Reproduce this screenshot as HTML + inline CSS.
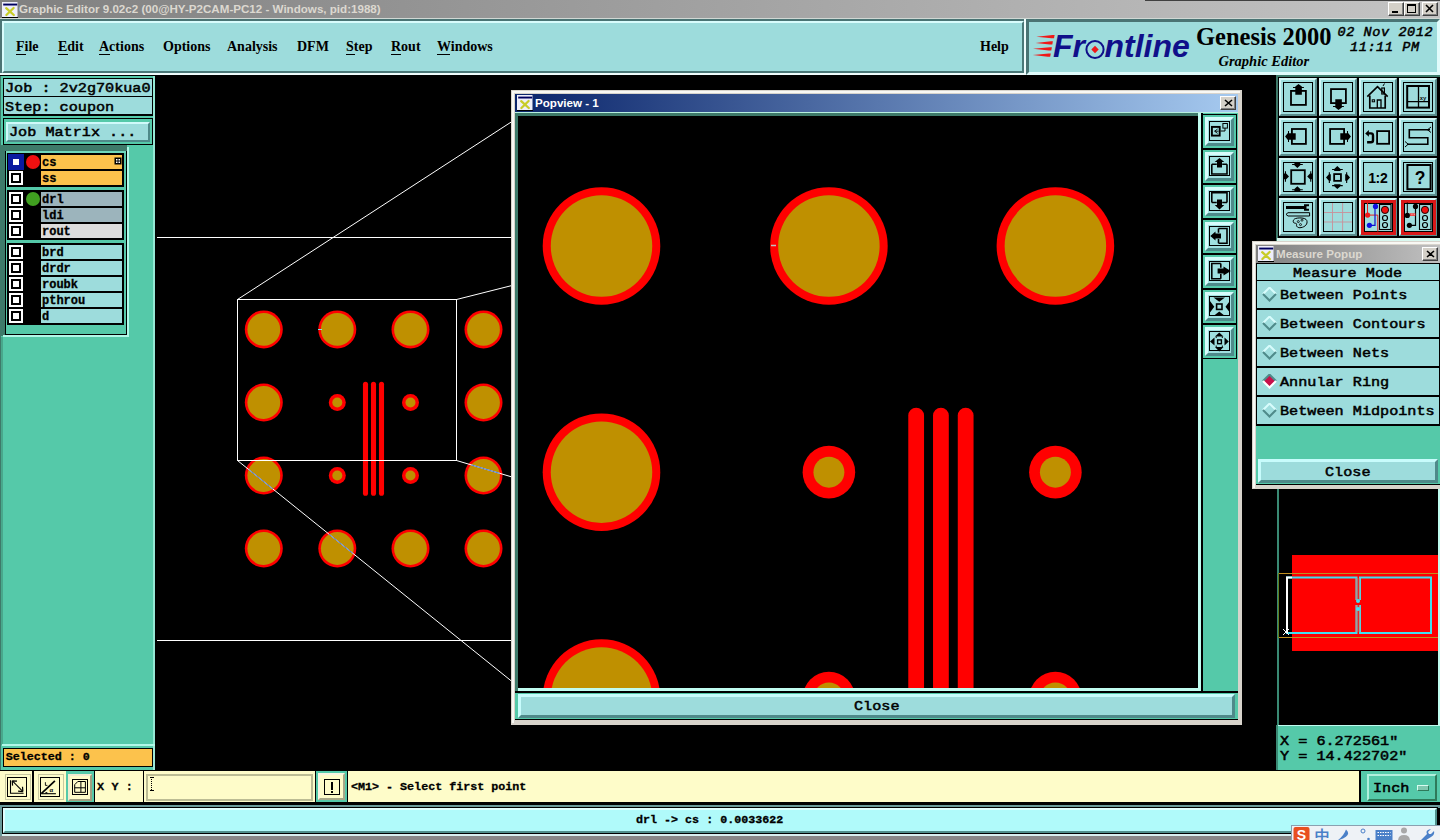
<!DOCTYPE html><html><head><meta charset="utf-8"><style>
*{margin:0;padding:0;box-sizing:border-box}
html,body{width:1440px;height:840px;overflow:hidden;background:#000}
body{position:relative;font-family:"Liberation Sans",sans-serif}
.a{position:absolute}
.mono{font-family:"Liberation Mono",monospace;font-weight:bold}
.ms{-webkit-text-stroke:0.3px #000}
.mb{font-weight:normal;-webkit-text-stroke:0.5px #000}
.serif{font-family:"Liberation Serif",serif;font-weight:bold}
.t{white-space:pre;line-height:1}
</style></head><body>
<div class="a" style="left:0px;top:0px;width:1440px;height:18px;background:linear-gradient(90deg,#808080 0%,#c4c4c4 100%);"></div>
<div class="a" style="left:1145px;top:0px;width:295px;height:1px;background:#404040;"></div>
<svg class="a" style="left:2px;top:2px" width="16" height="16" viewBox="0 0 16 16">
<rect x="0" y="0" width="15.5" height="15" fill="#eeeefa"/><rect x="1.2" y="1.6" width="14" height="1.9" fill="#000060"/>
<rect x="0" y="15" width="16" height="1" fill="#000"/>
<path d="M4.2 6.2 L11.8 13 M11.6 6 L4.4 13" stroke="#c8cc28" stroke-width="2.3" stroke-linecap="round"/></svg>
<div class="a t " style="left:19px;top:3px;font-size:11.6px;color:#dcd8d0;font-weight:bold">Graphic Editor 9.02c2 (00@HY-P2CAM-PC12 - Windows, pid:1988)</div>
<div class="a" style="left:1388px;top:2px;width:16px;height:14px;background:#d4d0c8;border-style:solid;border-width:1px;border-color:#fff #404040 #404040 #fff;box-shadow:inset -1px -1px 0 #808080"></div>
<div class="a" style="left:1392px;top:11px;width:6px;height:2px;background:#000"></div>
<div class="a" style="left:1404px;top:2px;width:16px;height:14px;background:#d4d0c8;border-style:solid;border-width:1px;border-color:#fff #404040 #404040 #fff;box-shadow:inset -1px -1px 0 #808080"></div>
<div class="a" style="left:1407px;top:4px;width:9px;height:9px;border:1px solid #000;border-top-width:2px"></div>
<div class="a" style="left:1422px;top:2px;width:16px;height:14px;background:#d4d0c8;border-style:solid;border-width:1px;border-color:#fff #404040 #404040 #fff;box-shadow:inset -1px -1px 0 #808080"></div>
<svg class="a" style="left:1425px;top:4px" width="10" height="9"><path d="M1 1L8 8M8 1L1 8" stroke="#000" stroke-width="1.6"/></svg>
<div class="a" style="left:0px;top:18px;width:1440px;height:1px;background:#d0d8d4;"></div>
<div class="a" style="left:0px;top:19px;width:1026px;height:56px;background:#4a7474;"></div>
<div class="a" style="left:0px;top:73px;width:1026px;height:2px;background:#eefcfc;"></div>
<div class="a" style="left:1024px;top:19px;width:2px;height:56px;background:#eefcfc;"></div>
<div class="a" style="left:2px;top:21px;width:1022px;height:52px;background:#9ddcdc;border-style:solid;border-width:2px;border-color:#d8fcfc #4a7878 #4a7878 #d8fcfc;"></div>
<div class="a t serif" style="left:16px;top:40px;font-size:14px;color:#000;">File</div>
<div class="a t serif" style="left:58px;top:40px;font-size:14px;color:#000;">Edit</div>
<div class="a t serif" style="left:99px;top:40px;font-size:14px;color:#000;">Actions</div>
<div class="a t serif" style="left:163px;top:40px;font-size:14px;color:#000;">Options</div>
<div class="a t serif" style="left:227px;top:40px;font-size:14px;color:#000;">Analysis</div>
<div class="a t serif" style="left:297px;top:40px;font-size:14px;color:#000;">DFM</div>
<div class="a t serif" style="left:346px;top:40px;font-size:14px;color:#000;">Step</div>
<div class="a t serif" style="left:391px;top:40px;font-size:14px;color:#000;">Rout</div>
<div class="a t serif" style="left:437px;top:40px;font-size:14px;color:#000;">Windows</div>
<div class="a t serif" style="left:980px;top:40px;font-size:14px;color:#000;">Help</div>
<div class="a" style="left:16px;top:54px;width:10px;height:1px;background:#000;"></div>
<div class="a" style="left:58px;top:54px;width:10px;height:1px;background:#000;"></div>
<div class="a" style="left:99px;top:54px;width:11px;height:1px;background:#000;"></div>
<div class="a" style="left:346px;top:54px;width:9px;height:1px;background:#000;"></div>
<div class="a" style="left:391px;top:54px;width:10px;height:1px;background:#000;"></div>
<div class="a" style="left:437px;top:54px;width:13px;height:1px;background:#000;"></div>
<div class="a" style="left:1026px;top:19px;width:414px;height:56px;background:#9ddcdc;border-style:solid;border-width:3px;border-color:#4a7474 #e0fcfc #e0fcfc #4a7474;"></div>
<svg class="a" style="left:1030px;top:30px" width="30" height="30" viewBox="0 0 30 30"><path d="M6.3 6.7 L22.6 5.1 L24.6 5.1 L24.0 8.3 L21.6 8.3 Z" fill="#f01818"/><path d="M5.6 12.9 L20.9 11.3 L22.9 11.3 L22.299999999999997 14.5 L19.9 14.5 Z" fill="#f01818"/><path d="M3 18.8 L19.9 17.2 L21.9 17.2 L21.299999999999997 20.400000000000002 L18.9 20.400000000000002 Z" fill="#f01818"/><path d="M2.8 25.1 L18.8 23.5 L20.8 23.5 L20.2 26.700000000000003 L17.8 26.700000000000003 Z" fill="#f01818"/></svg>
<div class="a t " style="left:1053px;top:29.5px;font-size:32px;color:#10108a;font-weight:bold;font-style:italic">Fr</div>
<div class="a t " style="left:1104.5px;top:29.5px;font-size:32px;color:#10108a;font-weight:bold;font-style:italic">ntline</div>
<svg class="a" style="left:1084px;top:39px" width="22" height="22" viewBox="0 0 22 22"><circle cx="11" cy="10.5" r="8.6" fill="none" stroke="#10108a" stroke-width="2"/><path d="M11 6.8 L14.7 10.5 L11 14.2 L7.3 10.5Z" fill="#f01818"/></svg>
<div class="a t serif" style="left:1196px;top:24.5px;font-size:24.5px;color:#000;">Genesis 2000</div>
<div class="a t " style="left:1218.5px;top:53.5px;font-size:14.5px;color:#000;font-family:'Liberation Serif',serif;font-weight:bold;font-style:italic">Graphic Editor</div>
<div class="a t mono mb" style="left:1337.5px;top:25.5px;font-size:13.5px;color:#000;font-style:italic;letter-spacing:0.6px">02 Nov 2012</div>
<div class="a t mono mb" style="left:1350px;top:40.5px;font-size:13.5px;color:#000;font-style:italic;letter-spacing:0.6px">11:11 PM</div>
<div class="a" style="left:0px;top:75px;width:155px;height:696px;background:#55c9a9;"></div>
<div class="a" style="left:0px;top:75px;width:155px;height:1px;background:#000;"></div>
<div class="a" style="left:0px;top:76px;width:1px;height:695px;background:#3e7a6a;"></div>
<div class="a" style="left:3px;top:78px;width:150px;height:38px;background:#000;"></div>
<div class="a" style="left:4px;top:79px;width:148px;height:17px;background:#9ddcdc;"></div>
<div class="a" style="left:4px;top:97px;width:148px;height:17px;background:#9ddcdc;"></div>
<div class="a t mono mb" style="left:4.8px;top:81.7px;font-size:13.5px;color:#000;transform:scaleX(1.123);transform-origin:0 0">Job : 2v2g70kua0</div>
<div class="a t mono mb" style="left:5px;top:101px;font-size:13.5px;color:#000;transform:scaleX(1.123);transform-origin:0 0">Step: coupon</div>
<div class="a" style="left:3px;top:118px;width:150px;height:27px;background:#000;"></div>
<div class="a" style="left:4px;top:119px;width:148px;height:25px;background:#55c9a9;"></div>
<div class="a" style="left:6px;top:121.5px;width:144px;height:20.5px;background:#9ddcdc;border-style:solid;border-width:2px;border-color:#d0fafa #4f8a8a #4f8a8a #d0fafa;"></div>
<div class="a t mono mb" style="left:9.2px;top:126.2px;font-size:13.5px;color:#000;transform:scaleX(1.123);transform-origin:0 0">Job Matrix ...</div>
<div class="a" style="left:1px;top:145px;width:126px;height:6px;background:#3e7a6a;"></div>
<div class="a" style="left:1px;top:145px;width:4px;height:191px;background:#3e7a6a;"></div>
<div class="a" style="left:5px;top:151px;width:122px;height:184px;background:#000;"></div>
<div class="a" style="left:6px;top:151px;width:120px;height:183px;background:#55c9a9;"></div>
<div class="a" style="left:6px;top:151px;width:120px;height:2px;background:#70d8bc;"></div>
<div class="a" style="left:3px;top:335px;width:126px;height:2px;background:#b0f8e8;"></div>
<div class="a" style="left:127px;top:147px;width:2px;height:190px;background:#b0f8e8;"></div>
<div class="a" style="left:153px;top:76px;width:2px;height:670px;background:#94e8d4;"></div>
<div class="a" style="left:7px;top:153px;width:117px;height:34px;background:#000;"></div>
<div class="a" style="left:41px;top:155px;width:81px;height:14px;background:#fcc24c;"></div>
<div class="a t mono ms" style="left:42px;top:156.6px;font-size:12px;color:#000;">cs</div>
<div class="a" style="left:8px;top:154px;width:16px;height:16px;background:#0a1aa0;"></div>
<div class="a" style="left:11px;top:157px;width:10px;height:10px;background:#0a1aa0;"></div>
<div class="a" style="left:13px;top:159px;width:6px;height:6px;background:#fff;"></div>
<div class="a" style="left:41px;top:171px;width:81px;height:14px;background:#fcc24c;"></div>
<div class="a t mono ms" style="left:42px;top:172.6px;font-size:12px;color:#000;">ss</div>
<div class="a" style="left:9px;top:171px;width:14px;height:14px;background:#fff;"></div>
<div class="a" style="left:11px;top:173px;width:10px;height:10px;background:#000;"></div>
<div class="a" style="left:13px;top:175px;width:6px;height:6px;background:#fff;"></div>
<div class="a" style="left:7px;top:190px;width:117px;height:50px;background:#000;"></div>
<div class="a" style="left:41px;top:192px;width:81px;height:14px;background:#9cb4bc;"></div>
<div class="a t mono ms" style="left:42px;top:193.6px;font-size:12px;color:#000;">drl</div>
<div class="a" style="left:9px;top:192px;width:14px;height:14px;background:#fff;"></div>
<div class="a" style="left:11px;top:194px;width:10px;height:10px;background:#000;"></div>
<div class="a" style="left:13px;top:196px;width:6px;height:6px;background:#fff;"></div>
<div class="a" style="left:41px;top:208px;width:81px;height:14px;background:#9cb4bc;"></div>
<div class="a t mono ms" style="left:42px;top:209.6px;font-size:12px;color:#000;">ldi</div>
<div class="a" style="left:9px;top:208px;width:14px;height:14px;background:#fff;"></div>
<div class="a" style="left:11px;top:210px;width:10px;height:10px;background:#000;"></div>
<div class="a" style="left:13px;top:212px;width:6px;height:6px;background:#fff;"></div>
<div class="a" style="left:41px;top:224px;width:81px;height:14px;background:#dcdcdc;"></div>
<div class="a t mono ms" style="left:42px;top:225.6px;font-size:12px;color:#000;">rout</div>
<div class="a" style="left:9px;top:224px;width:14px;height:14px;background:#fff;"></div>
<div class="a" style="left:11px;top:226px;width:10px;height:10px;background:#000;"></div>
<div class="a" style="left:13px;top:228px;width:6px;height:6px;background:#fff;"></div>
<div class="a" style="left:7px;top:243px;width:117px;height:82px;background:#000;"></div>
<div class="a" style="left:41px;top:245px;width:81px;height:14px;background:#9ddcdc;"></div>
<div class="a t mono ms" style="left:42px;top:246.6px;font-size:12px;color:#000;">brd</div>
<div class="a" style="left:9px;top:245px;width:14px;height:14px;background:#fff;"></div>
<div class="a" style="left:11px;top:247px;width:10px;height:10px;background:#000;"></div>
<div class="a" style="left:13px;top:249px;width:6px;height:6px;background:#fff;"></div>
<div class="a" style="left:41px;top:261px;width:81px;height:14px;background:#9ddcdc;"></div>
<div class="a t mono ms" style="left:42px;top:262.6px;font-size:12px;color:#000;">drdr</div>
<div class="a" style="left:9px;top:261px;width:14px;height:14px;background:#fff;"></div>
<div class="a" style="left:11px;top:263px;width:10px;height:10px;background:#000;"></div>
<div class="a" style="left:13px;top:265px;width:6px;height:6px;background:#fff;"></div>
<div class="a" style="left:41px;top:277px;width:81px;height:14px;background:#9ddcdc;"></div>
<div class="a t mono ms" style="left:42px;top:278.6px;font-size:12px;color:#000;">roubk</div>
<div class="a" style="left:9px;top:277px;width:14px;height:14px;background:#fff;"></div>
<div class="a" style="left:11px;top:279px;width:10px;height:10px;background:#000;"></div>
<div class="a" style="left:13px;top:281px;width:6px;height:6px;background:#fff;"></div>
<div class="a" style="left:41px;top:293px;width:81px;height:14px;background:#9ddcdc;"></div>
<div class="a t mono ms" style="left:42px;top:294.6px;font-size:12px;color:#000;">pthrou</div>
<div class="a" style="left:9px;top:293px;width:14px;height:14px;background:#fff;"></div>
<div class="a" style="left:11px;top:295px;width:10px;height:10px;background:#000;"></div>
<div class="a" style="left:13px;top:297px;width:6px;height:6px;background:#fff;"></div>
<div class="a" style="left:41px;top:309px;width:81px;height:14px;background:#9ddcdc;"></div>
<div class="a t mono ms" style="left:42px;top:310.6px;font-size:12px;color:#000;">d</div>
<div class="a" style="left:9px;top:309px;width:14px;height:14px;background:#fff;"></div>
<div class="a" style="left:11px;top:311px;width:10px;height:10px;background:#000;"></div>
<div class="a" style="left:13px;top:313px;width:6px;height:6px;background:#fff;"></div>
<div class="a" style="left:26px;top:155px;width:14px;height:14px;border-radius:50%;background:#f01010"></div>
<div class="a" style="left:26px;top:192px;width:14px;height:14px;border-radius:50%;background:#40a020"></div>
<svg class="a" style="left:114px;top:157px" width="8" height="9"><rect x="0.5" y="0.5" width="7" height="7" fill="#000"/><rect x="2" y="2" width="1.5" height="1.5" fill="#fff"/><rect x="4.5" y="2" width="1.5" height="1.5" fill="#fff"/><rect x="2" y="4.5" width="1.5" height="1.5" fill="#fff"/><rect x="4.5" y="4.5" width="1.5" height="1.5" fill="#fff"/></svg>
<div class="a" style="left:1px;top:337px;width:2px;height:408px;background:#48a88c;"></div>
<div class="a" style="left:2px;top:744px;width:153px;height:2px;background:#b0f8e8;"></div>
<div class="a" style="left:3px;top:748px;width:150px;height:19px;background:#000;"></div>
<div class="a" style="left:4px;top:749px;width:148px;height:17px;background:#fcc24c;"></div>
<div class="a" style="left:153px;top:746px;width:2px;height:24px;background:#9ce8d8;"></div>
<div class="a t mono ms" style="left:5.7px;top:751.7px;font-size:11.7px;color:#000;">Selected : 0</div>
<svg class="a" style="left:0;top:0" width="1440" height="840" viewBox="0 0 1440 840"><defs><clipPath id="mc"><rect x="155" y="75" width="1121" height="695"/></clipPath><clipPath id="pc"><rect x="518" y="116" width="680" height="572"/></clipPath></defs><g clip-path="url(#mc)"><circle cx="263.8" cy="329.4" r="19.0" fill="#ff0000"/><circle cx="263.8" cy="329.4" r="16.4" fill="#bf9000"/><circle cx="337.3" cy="329.4" r="19.0" fill="#ff0000"/><circle cx="337.3" cy="329.4" r="16.4" fill="#bf9000"/><circle cx="410.5" cy="329.4" r="19.0" fill="#ff0000"/><circle cx="410.5" cy="329.4" r="16.4" fill="#bf9000"/><circle cx="483.5" cy="329.4" r="19.0" fill="#ff0000"/><circle cx="483.5" cy="329.4" r="16.4" fill="#bf9000"/><circle cx="263.8" cy="402.5" r="19.0" fill="#ff0000"/><circle cx="263.8" cy="402.5" r="16.4" fill="#bf9000"/><circle cx="337.3" cy="402.5" r="8.5" fill="#ff0000"/><circle cx="337.3" cy="402.5" r="5.0" fill="#bf9000"/><circle cx="410.5" cy="402.5" r="8.5" fill="#ff0000"/><circle cx="410.5" cy="402.5" r="5.0" fill="#bf9000"/><circle cx="483.5" cy="402.5" r="19.0" fill="#ff0000"/><circle cx="483.5" cy="402.5" r="16.4" fill="#bf9000"/><circle cx="263.8" cy="475.5" r="19.0" fill="#ff0000"/><circle cx="263.8" cy="475.5" r="16.4" fill="#bf9000"/><circle cx="337.3" cy="475.5" r="8.5" fill="#ff0000"/><circle cx="337.3" cy="475.5" r="5.0" fill="#bf9000"/><circle cx="410.5" cy="475.5" r="8.5" fill="#ff0000"/><circle cx="410.5" cy="475.5" r="5.0" fill="#bf9000"/><circle cx="483.5" cy="475.5" r="19.0" fill="#ff0000"/><circle cx="483.5" cy="475.5" r="16.4" fill="#bf9000"/><circle cx="263.8" cy="548.5" r="19.0" fill="#ff0000"/><circle cx="263.8" cy="548.5" r="16.4" fill="#bf9000"/><circle cx="337.3" cy="548.5" r="19.0" fill="#ff0000"/><circle cx="337.3" cy="548.5" r="16.4" fill="#bf9000"/><circle cx="410.5" cy="548.5" r="19.0" fill="#ff0000"/><circle cx="410.5" cy="548.5" r="16.4" fill="#bf9000"/><circle cx="483.5" cy="548.5" r="19.0" fill="#ff0000"/><circle cx="483.5" cy="548.5" r="16.4" fill="#bf9000"/><line x1="365.5" y1="384.2" x2="365.5" y2="493.3" stroke="#ff0000" stroke-width="5.1" stroke-linecap="round"/><line x1="373.5" y1="384.2" x2="373.5" y2="493.3" stroke="#ff0000" stroke-width="5.1" stroke-linecap="round"/><line x1="381.5" y1="384.2" x2="381.5" y2="493.3" stroke="#ff0000" stroke-width="5.1" stroke-linecap="round"/><g stroke="#ffffff" stroke-width="1" fill="none" shape-rendering="crispEdges"><rect x="237.5" y="299.5" width="219" height="161"/><line x1="157" y1="237.5" x2="512" y2="237.5"/><line x1="157" y1="640.5" x2="512" y2="640.5"/></g><g stroke="#ffffff" stroke-width="1" fill="none"><line x1="237.5" y1="299.5" x2="512" y2="121.5"/><line x1="456.5" y1="299.5" x2="512" y2="285.5"/><line x1="237.5" y1="460.5" x2="512" y2="681.5"/><line x1="456.5" y1="460.5" x2="512" y2="477"/></g><line x1="318" y1="329.5" x2="322" y2="329.5" stroke="#80e0e0" stroke-width="1"/><clipPath id="gc"><circle cx="263.8" cy="475.5" r="16.4"/><circle cx="337.3" cy="548.5" r="16.4"/><circle cx="483.5" cy="475.5" r="16.4"/></clipPath><g clip-path="url(#gc)" stroke="#4a78e0" stroke-width="1" fill="none"><line x1="237.5" y1="460.5" x2="512" y2="681.5"/><line x1="456.5" y1="460.5" x2="512" y2="477"/></g></g></svg>
<div class="a" style="left:511px;top:90px;width:731px;height:635px;background:#d8d4cc;"></div>
<div class="a" style="left:512px;top:91px;width:728px;height:2px;background:#f8f8f4;"></div>
<div class="a" style="left:512px;top:91px;width:2px;height:632px;background:#f8f8f4;"></div>
<div class="a" style="left:515px;top:94px;width:723px;height:18px;background:linear-gradient(90deg,#0a246a 0%,#a6caf0 100%);"></div>
<svg class="a" style="left:517px;top:95px" width="16" height="16" viewBox="0 0 16 16">
<rect x="0" y="0" width="15.5" height="15" fill="#eeeefa"/><rect x="1.2" y="1.6" width="14" height="1.9" fill="#000060"/>
<rect x="0" y="15" width="16" height="1" fill="#000"/>
<path d="M4.2 6.2 L11.8 13 M11.6 6 L4.4 13" stroke="#c8cc28" stroke-width="2.3" stroke-linecap="round"/></svg>
<div class="a t " style="left:535px;top:97px;font-size:11.6px;color:#ffffff;font-weight:bold">Popview - 1</div>
<div class="a" style="left:1220px;top:96px;width:16px;height:14px;background:#d4d0c8;border-style:solid;border-width:1px;border-color:#fff #404040 #404040 #fff;box-shadow:inset -1px -1px 0 #808080"></div>
<svg class="a" style="left:1224px;top:99px" width="9" height="8"><path d="M1 1L8 7M8 1L1 7" stroke="#000" stroke-width="1.6"/></svg>
<div class="a" style="left:515px;top:112px;width:723px;height:608px;background:#55c9a9;"></div>
<div class="a" style="left:515px;top:112px;width:723px;height:1px;background:#b8f0e0;"></div>
<div class="a" style="left:515px;top:113px;width:686px;height:3px;background:#3e7a6a;"></div>
<div class="a" style="left:515px;top:113px;width:3px;height:578px;background:#3e7a6a;"></div>
<div class="a" style="left:1198px;top:113px;width:3px;height:578px;background:#c0fcf0;"></div>
<div class="a" style="left:518px;top:688px;width:683px;height:3px;background:#c0fcf0;"></div>
<div class="a" style="left:518px;top:116px;width:680px;height:572px;background:#000;"></div>
<div class="a" style="left:1201px;top:113px;width:2px;height:578px;background:#000;"></div>
<svg class="a" style="left:0;top:0" width="1440" height="840" viewBox="0 0 1440 840"><g clip-path="url(#pc)"><g transform="translate(601.5 246) scale(3.094) translate(-263.8 -329.4)"><circle cx="263.8" cy="329.4" r="19.0" fill="#ff0000"/><circle cx="263.8" cy="329.4" r="16.4" fill="#bf9000"/><circle cx="337.3" cy="329.4" r="19.0" fill="#ff0000"/><circle cx="337.3" cy="329.4" r="16.4" fill="#bf9000"/><circle cx="410.5" cy="329.4" r="19.0" fill="#ff0000"/><circle cx="410.5" cy="329.4" r="16.4" fill="#bf9000"/><circle cx="483.5" cy="329.4" r="19.0" fill="#ff0000"/><circle cx="483.5" cy="329.4" r="16.4" fill="#bf9000"/><circle cx="263.8" cy="402.5" r="19.0" fill="#ff0000"/><circle cx="263.8" cy="402.5" r="16.4" fill="#bf9000"/><circle cx="337.3" cy="402.5" r="8.5" fill="#ff0000"/><circle cx="337.3" cy="402.5" r="5.0" fill="#bf9000"/><circle cx="410.5" cy="402.5" r="8.5" fill="#ff0000"/><circle cx="410.5" cy="402.5" r="5.0" fill="#bf9000"/><circle cx="483.5" cy="402.5" r="19.0" fill="#ff0000"/><circle cx="483.5" cy="402.5" r="16.4" fill="#bf9000"/><circle cx="263.8" cy="475.5" r="19.0" fill="#ff0000"/><circle cx="263.8" cy="475.5" r="16.4" fill="#bf9000"/><circle cx="337.3" cy="475.5" r="8.5" fill="#ff0000"/><circle cx="337.3" cy="475.5" r="5.0" fill="#bf9000"/><circle cx="410.5" cy="475.5" r="8.5" fill="#ff0000"/><circle cx="410.5" cy="475.5" r="5.0" fill="#bf9000"/><circle cx="483.5" cy="475.5" r="19.0" fill="#ff0000"/><circle cx="483.5" cy="475.5" r="16.4" fill="#bf9000"/><circle cx="263.8" cy="548.5" r="19.0" fill="#ff0000"/><circle cx="263.8" cy="548.5" r="16.4" fill="#bf9000"/><circle cx="337.3" cy="548.5" r="19.0" fill="#ff0000"/><circle cx="337.3" cy="548.5" r="16.4" fill="#bf9000"/><circle cx="410.5" cy="548.5" r="19.0" fill="#ff0000"/><circle cx="410.5" cy="548.5" r="16.4" fill="#bf9000"/><circle cx="483.5" cy="548.5" r="19.0" fill="#ff0000"/><circle cx="483.5" cy="548.5" r="16.4" fill="#bf9000"/><line x1="365.5" y1="384.2" x2="365.5" y2="493.3" stroke="#ff0000" stroke-width="5.1" stroke-linecap="round"/><line x1="373.5" y1="384.2" x2="373.5" y2="493.3" stroke="#ff0000" stroke-width="5.1" stroke-linecap="round"/><line x1="381.5" y1="384.2" x2="381.5" y2="493.3" stroke="#ff0000" stroke-width="5.1" stroke-linecap="round"/></g><line x1="771" y1="245.5" x2="776" y2="245.5" stroke="#c0c0c0" stroke-width="1.5"/></g></svg>
<div class="a" style="left:1203px;top:113px;width:34px;height:578px;background:#55c9a9;"></div>
<div class="a" style="left:1202px;top:114px;width:35px;height:35px;background:#000;"></div>
<div class="a" style="left:1203px;top:115px;width:33px;height:33px;background:#55c9a9;"></div>
<div class="a" style="left:1205px;top:117px;width:29px;height:29px;background:#a0e0e0;border-style:solid;border-width:3px;border-color:#d8fcfc #4f8a8a #4f8a8a #d8fcfc;"></div>
<div class="a" style="left:1209px;top:121px;width:21px;height:20px;background:transparent;border:1px solid #000"></div>
<svg class="a" style="left:1203px;top:115px" width="33" height="33" viewBox="0 0 33 33"><rect x="8.9" y="11.9" width="7.8" height="8.7" fill="none" stroke="#000" stroke-width="1.9"/><path d="M14.6 14 L11.6 16.2 L14.6 18.4 M11.8 16.2 H15.5" fill="none" stroke="#000" stroke-width="0.9"/><rect x="19.9" y="8.5" width="4.5" height="4.6" fill="none" stroke="#000" stroke-width="1"/><path d="M22 13.1 V16 H17.5" fill="none" stroke="#000" stroke-width="1"/></svg>
<div class="a" style="left:1202px;top:149px;width:35px;height:35px;background:#000;"></div>
<div class="a" style="left:1203px;top:150px;width:33px;height:33px;background:#55c9a9;"></div>
<div class="a" style="left:1205px;top:152px;width:29px;height:29px;background:#a0e0e0;border-style:solid;border-width:3px;border-color:#d8fcfc #4f8a8a #4f8a8a #d8fcfc;"></div>
<div class="a" style="left:1209px;top:156px;width:21px;height:20px;background:transparent;border:1px solid #000"></div>
<svg class="a" style="left:1203px;top:150px" width="33" height="33" viewBox="0 0 33 33"><path d="M8.8 14.2 V24 H24 V14.2 M8.8 14.2 H13.8 M24 14.2 H19.2" fill="none" stroke="#000" stroke-width="1.6"/><path d="M14 17.5 V12 H11.7 L16.5 8 L21.3 12 H19 V17.5 Z" fill="#000"/></svg>
<div class="a" style="left:1202px;top:184px;width:35px;height:35px;background:#000;"></div>
<div class="a" style="left:1203px;top:185px;width:33px;height:33px;background:#55c9a9;"></div>
<div class="a" style="left:1205px;top:187px;width:29px;height:29px;background:#a0e0e0;border-style:solid;border-width:3px;border-color:#d8fcfc #4f8a8a #4f8a8a #d8fcfc;"></div>
<div class="a" style="left:1209px;top:191px;width:21px;height:20px;background:transparent;border:1px solid #000"></div>
<svg class="a" style="left:1203px;top:185px" width="33" height="33" viewBox="0 0 33 33"><path d="M8.8 17.5 V7.8 H24 V17.5 M8.8 17.5 H13.8 M24 17.5 H19.2" fill="none" stroke="#000" stroke-width="1.6"/><path d="M14 14.5 V20 H11.7 L16.5 24.4 L21.3 20 H19 V14.5 Z" fill="#000"/></svg>
<div class="a" style="left:1202px;top:219px;width:35px;height:35px;background:#000;"></div>
<div class="a" style="left:1203px;top:220px;width:33px;height:33px;background:#55c9a9;"></div>
<div class="a" style="left:1205px;top:222px;width:29px;height:29px;background:#a0e0e0;border-style:solid;border-width:3px;border-color:#d8fcfc #4f8a8a #4f8a8a #d8fcfc;"></div>
<div class="a" style="left:1209px;top:226px;width:21px;height:20px;background:transparent;border:1px solid #000"></div>
<svg class="a" style="left:1203px;top:220px" width="33" height="33" viewBox="0 0 33 33"><path d="M15.5 8.5 H24 V23.2 H15.5 M15.5 8.5 V12.8 M15.5 23.2 V19" fill="none" stroke="#000" stroke-width="1.6"/><path d="M18 13.5 H12.5 V11.4 L7.3 16 L12.5 20.6 V18.5 H18 Z" fill="#000"/></svg>
<div class="a" style="left:1202px;top:254px;width:35px;height:35px;background:#000;"></div>
<div class="a" style="left:1203px;top:255px;width:33px;height:33px;background:#55c9a9;"></div>
<div class="a" style="left:1205px;top:257px;width:29px;height:29px;background:#a0e0e0;border-style:solid;border-width:3px;border-color:#d8fcfc #4f8a8a #4f8a8a #d8fcfc;"></div>
<div class="a" style="left:1209px;top:261px;width:21px;height:20px;background:transparent;border:1px solid #000"></div>
<svg class="a" style="left:1203px;top:255px" width="33" height="33" viewBox="0 0 33 33"><path d="M17.8 8.5 H8.8 V23.8 H17.8 M17.8 8.5 V12.8 M17.8 23.8 V19" fill="none" stroke="#000" stroke-width="1.6"/><path d="M14.6 13.5 H20.5 V11.4 L27.8 16 L20.5 20.6 V18.5 H14.6 Z" fill="#000"/></svg>
<div class="a" style="left:1202px;top:289px;width:35px;height:35px;background:#000;"></div>
<div class="a" style="left:1203px;top:290px;width:33px;height:33px;background:#55c9a9;"></div>
<div class="a" style="left:1205px;top:292px;width:29px;height:29px;background:#a0e0e0;border-style:solid;border-width:3px;border-color:#d8fcfc #4f8a8a #4f8a8a #d8fcfc;"></div>
<div class="a" style="left:1209px;top:296px;width:21px;height:20px;background:transparent;border:1px solid #000"></div>
<svg class="a" style="left:1203px;top:290px" width="33" height="33" viewBox="0 0 33 33"><rect x="13.6" y="14" width="5.4" height="5.4" fill="none" stroke="#000" stroke-width="1.6"/><path d="M10.5 7.4 H22 L16.25 11.8 Z M10.5 26 H22 L16.25 21.6 Z M7 11 V22.5 L11.3 16.7 Z M26.8 11 V22.5 L22.5 16.7 Z" fill="#000"/></svg>
<div class="a" style="left:1202px;top:324px;width:35px;height:35px;background:#000;"></div>
<div class="a" style="left:1203px;top:325px;width:33px;height:33px;background:#55c9a9;"></div>
<div class="a" style="left:1205px;top:327px;width:29px;height:29px;background:#a0e0e0;border-style:solid;border-width:3px;border-color:#d8fcfc #4f8a8a #4f8a8a #d8fcfc;"></div>
<div class="a" style="left:1209px;top:331px;width:21px;height:20px;background:transparent;border:1px solid #000"></div>
<svg class="a" style="left:1203px;top:325px" width="33" height="33" viewBox="0 0 33 33"><rect x="14.6" y="14.9" width="3.8" height="3.8" fill="none" stroke="#000" stroke-width="1.4"/><path d="M12 11.4 H20.5 L16.25 7.5 Z M12 22 H20.5 L16.25 26.5 Z M11.5 12.5 V20.5 L7 16.5 Z M21.5 12.5 V20.5 L25.8 16.5 Z" fill="#000"/><path d="M13.2 11.4 V13 M19.3 11.4 V13 M13.2 22 V20.5 M19.3 22 V20.5" stroke="#000" stroke-width="1"/></svg>
<div class="a" style="left:1202px;top:358px;width:35px;height:1px;background:#000;"></div>
<div class="a" style="left:515px;top:691px;width:723px;height:2px;background:#000;"></div>
<div class="a" style="left:515px;top:693px;width:723px;height:27px;background:#55c9a9;"></div>
<div class="a" style="left:515px;top:719px;width:723px;height:1px;background:#000;"></div>
<div class="a" style="left:518px;top:694px;width:717px;height:24px;background:#9ddcdc;border-style:solid;border-width:3px;border-color:#c8fcfc #4f8a8a #4f8a8a #c8fcfc;"></div>
<div class="a t mono mb" style="left:853.7px;top:700.4px;font-size:13.5px;color:#000;transform:scaleX(1.123);transform-origin:0 0">Close</div>
<div class="a" style="left:1276px;top:75px;width:164px;height:166px;background:#3e7a6a;"></div>
<div class="a" style="left:1278px;top:77px;width:162px;height:161px;background:#000;"></div>
<div class="a" style="left:1279px;top:78px;width:38px;height:38px;background:#9edcdc;border-style:solid;border-width:2px;border-color:#d4f6f6 #5a8c8c #5a8c8c #d4f6f6;"></div>
<div class="a" style="left:1283px;top:82px;width:30px;height:30px;background:transparent;border:1px solid #000"></div>
<svg class="a" style="left:1279px;top:78px" width="38" height="38" viewBox="0 0 38 38"><rect x="12" y="12.9" width="14.9" height="14" fill="none" stroke="#000" stroke-width="1.8"/><path d="M19.5 6.1 L22.85 8.6 V9 H24.9 V10 H22.85 V16.7 H16.3 V10 H14 V9 H16.3 V8.6 Z" fill="#000"/></svg>
<div class="a" style="left:1319px;top:78px;width:38px;height:38px;background:#9edcdc;border-style:solid;border-width:2px;border-color:#d4f6f6 #5a8c8c #5a8c8c #d4f6f6;"></div>
<div class="a" style="left:1323px;top:82px;width:30px;height:30px;background:transparent;border:1px solid #000"></div>
<svg class="a" style="left:1319px;top:78px" width="38" height="38" viewBox="0 0 38 38"><g transform="matrix(1 0 0 -1 0 38)"><rect x="12" y="12.9" width="14.9" height="14" fill="none" stroke="#000" stroke-width="1.8"/><path d="M19.5 6.1 L22.85 8.6 V9 H24.9 V10 H22.85 V16.7 H16.3 V10 H14 V9 H16.3 V8.6 Z" fill="#000"/></g></svg>
<div class="a" style="left:1359px;top:78px;width:38px;height:38px;background:#9edcdc;border-style:solid;border-width:2px;border-color:#d4f6f6 #5a8c8c #5a8c8c #d4f6f6;"></div>
<div class="a" style="left:1363px;top:82px;width:30px;height:30px;background:transparent;border:1px solid #000"></div>
<svg class="a" style="left:1359px;top:78px" width="38" height="38" viewBox="0 0 38 38"><path d="M8.3 18.6 L18.5 8.6 L28.7 18.6" fill="none" stroke="#000" stroke-width="1.6"/><path d="M10.8 17.5 V30 H26.2 V17.5" fill="none" stroke="#000" stroke-width="1.7"/><rect x="22.8" y="10" width="2.6" height="6" fill="none" stroke="#000" stroke-width="1.2"/><path d="M24 8 L25.5 5.5" stroke="#000" stroke-width="1"/><path d="M18.3 30 V22 H22 V30" fill="none" stroke="#000" stroke-width="1.3"/><rect x="13.2" y="21.8" width="2.4" height="2" fill="none" stroke="#000" stroke-width="1"/></svg>
<div class="a" style="left:1399px;top:78px;width:38px;height:38px;background:#9edcdc;border-style:solid;border-width:2px;border-color:#d4f6f6 #5a8c8c #5a8c8c #d4f6f6;"></div>
<div class="a" style="left:1403px;top:82px;width:30px;height:30px;background:transparent;border:1px solid #000"></div>
<svg class="a" style="left:1399px;top:78px" width="38" height="38" viewBox="0 0 38 38"><rect x="8.2" y="8" width="21.8" height="21.6" fill="none" stroke="#000" stroke-width="2"/><path d="M19.5 8 V29.6 M8.2 23.6 H30" stroke="#000" stroke-width="1.3"/><text x="20.8" y="22" font-family="Liberation Mono" font-size="5.5" font-weight="bold">xy</text></svg>
<div class="a" style="left:1279px;top:118px;width:38px;height:38px;background:#9edcdc;border-style:solid;border-width:2px;border-color:#d4f6f6 #5a8c8c #5a8c8c #d4f6f6;"></div>
<div class="a" style="left:1283px;top:122px;width:30px;height:30px;background:transparent;border:1px solid #000"></div>
<svg class="a" style="left:1279px;top:118px" width="38" height="38" viewBox="0 0 38 38"><g transform="matrix(0 1 1 0 0 -1)"><rect x="12" y="12.9" width="14.9" height="14" fill="none" stroke="#000" stroke-width="1.8"/><path d="M19.5 6.1 L22.85 8.6 V9 H24.9 V10 H22.85 V16.7 H16.3 V10 H14 V9 H16.3 V8.6 Z" fill="#000"/></g></svg>
<div class="a" style="left:1319px;top:118px;width:38px;height:38px;background:#9edcdc;border-style:solid;border-width:2px;border-color:#d4f6f6 #5a8c8c #5a8c8c #d4f6f6;"></div>
<div class="a" style="left:1323px;top:122px;width:30px;height:30px;background:transparent;border:1px solid #000"></div>
<svg class="a" style="left:1319px;top:118px" width="38" height="38" viewBox="0 0 38 38"><g transform="matrix(0 1 -1 0 38 -1)"><rect x="12" y="12.9" width="14.9" height="14" fill="none" stroke="#000" stroke-width="1.8"/><path d="M19.5 6.1 L22.85 8.6 V9 H24.9 V10 H22.85 V16.7 H16.3 V10 H14 V9 H16.3 V8.6 Z" fill="#000"/></g></svg>
<div class="a" style="left:1359px;top:118px;width:38px;height:38px;background:#9edcdc;border-style:solid;border-width:2px;border-color:#d4f6f6 #5a8c8c #5a8c8c #d4f6f6;"></div>
<div class="a" style="left:1363px;top:122px;width:30px;height:30px;background:transparent;border:1px solid #000"></div>
<svg class="a" style="left:1359px;top:118px" width="38" height="38" viewBox="0 0 38 38"><rect x="18.1" y="13.1" width="12" height="12.7" fill="none" stroke="#000" stroke-width="1.8"/><path d="M9.2 15.4 H12 Q14 15.4 14 17.6 V22.2 Q14 24.2 12 24.2 H8.1" fill="none" stroke="#000" stroke-width="2.4"/><path d="M6.2 15.4 L9.9 12 V18.8 Z" fill="#000"/></svg>
<div class="a" style="left:1399px;top:118px;width:38px;height:38px;background:#9edcdc;border-style:solid;border-width:2px;border-color:#d4f6f6 #5a8c8c #5a8c8c #d4f6f6;"></div>
<div class="a" style="left:1403px;top:122px;width:30px;height:30px;background:transparent;border:1px solid #000"></div>
<svg class="a" style="left:1399px;top:118px" width="38" height="38" viewBox="0 0 38 38"><path d="M31 11.8 H10.3 V19.8 H28.8 V26.2 H8.2" fill="none" stroke="#000" stroke-width="1.6"/><path d="M32 9 L28.5 11.8 L32 14.5 M6 23.5 L9.2 26.2 L6 29" fill="none" stroke="#000" stroke-width="1"/></svg>
<div class="a" style="left:1279px;top:158px;width:38px;height:38px;background:#9edcdc;border-style:solid;border-width:2px;border-color:#d4f6f6 #5a8c8c #5a8c8c #d4f6f6;"></div>
<div class="a" style="left:1283px;top:162px;width:30px;height:30px;background:transparent;border:1px solid #000"></div>
<svg class="a" style="left:1279px;top:158px" width="38" height="38" viewBox="0 0 38 38"><rect x="12.2" y="12.2" width="13.6" height="13.6" fill="none" stroke="#000" stroke-width="1.8"/><path d="M15.4 4.6 H21.3 V5.9 H23.8 V7 H21.3 V7.2 L18.35 10 L15.4 7.2 V7 H13.1 V5.9 H15.4 Z" fill="#000"/><g transform="matrix(1 0 0 -1 0 38.2)"><path d="M15.4 4.6 H21.3 V5.9 H23.8 V7 H21.3 V7.2 L18.35 10 L15.4 7.2 V7 H13.1 V5.9 H15.4 Z" fill="#000"/></g><g transform="matrix(0 1 1 0 0 0.05)"><path d="M15.4 4.6 H21.3 V5.9 H23.8 V7 H21.3 V7.2 L18.35 10 L15.4 7.2 V7 H13.1 V5.9 H15.4 Z" fill="#000"/></g><g transform="matrix(0 1 -1 0 38.2 0.05)"><path d="M15.4 4.6 H21.3 V5.9 H23.8 V7 H21.3 V7.2 L18.35 10 L15.4 7.2 V7 H13.1 V5.9 H15.4 Z" fill="#000"/></g></svg>
<div class="a" style="left:1319px;top:158px;width:38px;height:38px;background:#9edcdc;border-style:solid;border-width:2px;border-color:#d4f6f6 #5a8c8c #5a8c8c #d4f6f6;"></div>
<div class="a" style="left:1323px;top:162px;width:30px;height:30px;background:transparent;border:1px solid #000"></div>
<svg class="a" style="left:1319px;top:158px" width="38" height="38" viewBox="0 0 38 38"><rect x="15.15" y="16.1" width="6.8" height="6.75" fill="none" stroke="#000" stroke-width="1.8"/><path d="M18.3 8.1 L21.5 10.9 H23.75 V12 H21.5 V12.9 H15.2 V12 H13.1 V10.9 H15.2 Z" fill="#000"/><g transform="matrix(1 0 0 -1 0 39.1)"><path d="M18.3 8.1 L21.5 10.9 H23.75 V12 H21.5 V12.9 H15.2 V12 H13.1 V10.9 H15.2 Z" fill="#000"/></g><g transform="matrix(0 1 1 0 -1.1 1.15)"><path d="M18.3 8.1 L21.5 10.9 H23.75 V12 H21.5 V12.9 H15.2 V12 H13.1 V10.9 H15.2 Z" fill="#000"/></g><g transform="matrix(0 1 -1 0 39.1 1.15)"><path d="M18.3 8.1 L21.5 10.9 H23.75 V12 H21.5 V12.9 H15.2 V12 H13.1 V10.9 H15.2 Z" fill="#000"/></g></svg>
<div class="a" style="left:1359px;top:158px;width:38px;height:38px;background:#9edcdc;border-style:solid;border-width:2px;border-color:#d4f6f6 #5a8c8c #5a8c8c #d4f6f6;"></div>
<div class="a" style="left:1363px;top:162px;width:30px;height:30px;background:transparent;border:1px solid #000"></div>
<svg class="a" style="left:1359px;top:158px" width="38" height="38" viewBox="0 0 38 38"><text x="18.8" y="24.5" text-anchor="middle" font-family="Liberation Sans" font-weight="bold" font-size="14" letter-spacing="-0.3">1:2</text></svg>
<div class="a" style="left:1399px;top:158px;width:38px;height:38px;background:#9edcdc;border-style:solid;border-width:2px;border-color:#d4f6f6 #5a8c8c #5a8c8c #d4f6f6;"></div>
<div class="a" style="left:1403px;top:162px;width:30px;height:30px;background:transparent;border:1px solid #000"></div>
<svg class="a" style="left:1399px;top:158px" width="38" height="38" viewBox="0 0 38 38"><rect x="8.4" y="7" width="23.2" height="24.2" fill="none" stroke="#000" stroke-width="2"/><text x="21" y="25.6" text-anchor="middle" font-family="Liberation Sans" font-weight="bold" font-size="17.5">?</text></svg>
<div class="a" style="left:1279px;top:198px;width:38px;height:38px;background:#9edcdc;border-style:solid;border-width:2px;border-color:#d4f6f6 #5a8c8c #5a8c8c #d4f6f6;"></div>
<div class="a" style="left:1283px;top:202px;width:30px;height:30px;background:transparent;border:1px solid #000"></div>
<svg class="a" style="left:1279px;top:198px" width="38" height="38" viewBox="0 0 38 38"><rect x="7" y="8" width="18.5" height="3" fill="#000"/><path d="M25 6.3 H30 V8.3 H27.5 V10.7 H30 V12.7 H25 Z" fill="#000"/><path d="M9 14.7 H30.6 V18 H9 L7 16.35 Z" fill="none" stroke="#000" stroke-width="1"/><path d="M15.5 21 C18 19.5 26.5 19.2 27.8 22.5 C29 26 26 29 22 29.6 C19 30.2 17 28.5 17.6 26.5 C18 25 15.6 25.5 14.6 24.6 C13.8 23.6 14.3 21.8 15.5 21 Z" fill="none" stroke="#000" stroke-width="1"/><circle cx="19.3" cy="23.6" r="1" fill="none" stroke="#000" stroke-width="0.8"/><circle cx="23" cy="22.2" r="1" fill="none" stroke="#000" stroke-width="0.8"/><circle cx="21.5" cy="26.6" r="1" fill="none" stroke="#000" stroke-width="0.8"/></svg>
<div class="a" style="left:1319px;top:198px;width:38px;height:38px;background:#9edcdc;border-style:solid;border-width:2px;border-color:#d4f6f6 #5a8c8c #5a8c8c #d4f6f6;"></div>
<div class="a" style="left:1323px;top:202px;width:30px;height:30px;background:transparent;border:1px solid #000"></div>
<svg class="a" style="left:1319px;top:198px" width="38" height="38" viewBox="0 0 38 38"><path d="M13.5 5 V33 M23.6 5 V33 M5 14.5 H33 M5 24 H33" stroke="#c89098" stroke-width="0.9"/></svg>
<div class="a" style="left:1359px;top:198px;width:38px;height:38px;background:#9edcdc;border-style:solid;border-width:2px;border-color:#d4f6f6 #5a8c8c #5a8c8c #d4f6f6;"></div>
<div class="a" style="left:1361px;top:200px;width:35px;height:35px;background:#d81818;"></div>
<div class="a" style="left:1363.5px;top:202.5px;width:29.5px;height:29.5px;background:#a0dede;border:1px solid #000"></div>
<svg class="a" style="left:1359px;top:198px" width="38" height="38" viewBox="0 0 38 38"><rect x="20.5" y="6.5" width="11.5" height="25" fill="none" stroke="#000" stroke-width="1.1"/><circle cx="26" cy="11.9" r="3.6" fill="#f01010" stroke="#000" stroke-width="0.9"/><circle cx="26" cy="20" r="2.5" fill="none" stroke="#000" stroke-width="1.2"/><circle cx="26" cy="27" r="2.5" fill="none" stroke="#000" stroke-width="1.2"/><path d="M8.5 4.5 V17.1 H18.8 V33.5" fill="none" stroke="#e82020" stroke-width="1"/><path d="M16 8.4 V27.3 H10.4" fill="none" stroke="#1010d0" stroke-width="1.2"/><circle cx="16.5" cy="8.4" r="2.6" fill="#1010e0"/><circle cx="8.6" cy="17.1" r="2.6" fill="#f01818"/><circle cx="10.4" cy="27.3" r="2.6" fill="#1010e0"/></svg>
<div class="a" style="left:1399px;top:198px;width:38px;height:38px;background:#9edcdc;border-style:solid;border-width:2px;border-color:#d4f6f6 #5a8c8c #5a8c8c #d4f6f6;"></div>
<div class="a" style="left:1401px;top:200px;width:35px;height:35px;background:#d81818;"></div>
<div class="a" style="left:1403.5px;top:202.5px;width:29.5px;height:29.5px;background:#a0dede;border:1px solid #000"></div>
<svg class="a" style="left:1399px;top:198px" width="38" height="38" viewBox="0 0 38 38"><rect x="20.5" y="6.5" width="11.5" height="25" fill="none" stroke="#000" stroke-width="1.1"/><circle cx="26" cy="11.9" r="3.6" fill="#f01010" stroke="#000" stroke-width="0.9"/><circle cx="26" cy="20" r="2.5" fill="none" stroke="#000" stroke-width="1.2"/><circle cx="26" cy="27" r="2.5" fill="none" stroke="#000" stroke-width="1.2"/><path d="M8.3 4.5 V17.4" fill="none" stroke="#000" stroke-width="1"/><path d="M16.5 8.4 V27.3 H10.4" fill="none" stroke="#000" stroke-width="1.2"/><rect x="10.5" y="15.3" width="6" height="2.6" fill="#f01818"/><path d="M12.2 15.6 V17.4 M13.9 15.6 V17.4 M15.4 15.6 V17.4" stroke="#fff" stroke-width="0.6"/><circle cx="16.5" cy="8.4" r="2.6" fill="#000"/><circle cx="8.3" cy="17.4" r="2.6" fill="#000"/><circle cx="10.4" cy="27.3" r="2.6" fill="#000"/></svg>
<div class="a" style="left:1277px;top:238px;width:163px;height:3px;background:#d8f8f0;"></div>
<div class="a" style="left:1252px;top:241px;width:188px;height:248px;background:#d8d4cc;"></div>
<div class="a" style="left:1253px;top:242px;width:187px;height:2px;background:#f8f8f4;"></div>
<div class="a" style="left:1253px;top:242px;width:2px;height:246px;background:#f8f8f4;"></div>
<div class="a" style="left:1256px;top:245px;width:184px;height:18px;background:linear-gradient(90deg,#808080 0%,#c0c0c0 100%);"></div>
<svg class="a" style="left:1258px;top:246px" width="16" height="16" viewBox="0 0 16 16">
<rect x="0" y="0" width="15.5" height="15" fill="#eeeefa"/><rect x="1.2" y="1.6" width="14" height="1.9" fill="#000060"/>
<rect x="0" y="15" width="16" height="1" fill="#000"/>
<path d="M4.2 6.2 L11.8 13 M11.6 6 L4.4 13" stroke="#c8cc28" stroke-width="2.3" stroke-linecap="round"/></svg>
<div class="a t " style="left:1276px;top:248px;font-size:11.6px;color:#dcd8d0;font-weight:bold">Measure Popup</div>
<div class="a" style="left:1422px;top:247px;width:16px;height:14px;background:#d4d0c8;border-style:solid;border-width:1px;border-color:#fff #404040 #404040 #fff;box-shadow:inset -1px -1px 0 #808080"></div>
<svg class="a" style="left:1426px;top:250px" width="9" height="8"><path d="M1 1L8 7M8 1L1 7" stroke="#000" stroke-width="1.6"/></svg>
<div class="a" style="left:1256px;top:263px;width:184px;height:222px;background:#55c9a9;"></div>
<div class="a" style="left:1256px;top:263px;width:184px;height:163px;background:#000;"></div>
<div class="a" style="left:1257px;top:264px;width:182px;height:16px;background:#9ddcdc;"></div>
<div class="a t mono mb" style="left:1293.3px;top:267.4px;font-size:13.5px;color:#000;transform:scaleX(1.123);transform-origin:0 0">Measure Mode</div>
<div class="a" style="left:1257px;top:281px;width:182px;height:27px;background:#9ddcdc;"></div>
<div class="a t mono mb" style="left:1279.9px;top:288.8px;font-size:13.5px;color:#000;transform:scaleX(1.123);transform-origin:0 0">Between Points</div>
<svg class="a" style="left:1262px;top:287px" width="15" height="15" viewBox="0 0 15 15"><path d="M7.5 0.5 L14 7 L7.5 13.5 L1 7 Z" fill="#a0dede" stroke="none"/><path d="M1 7 L7.5 0.5 L14 7" fill="none" stroke="#d8fcfc" stroke-width="2"/><path d="M1 7 L7.5 13.5 L14 7" fill="none" stroke="#4f8a8a" stroke-width="2"/></svg>
<div class="a" style="left:1257px;top:310px;width:182px;height:27px;background:#9ddcdc;"></div>
<div class="a t mono mb" style="left:1279.9px;top:317.8px;font-size:13.5px;color:#000;transform:scaleX(1.123);transform-origin:0 0">Between Contours</div>
<svg class="a" style="left:1262px;top:316px" width="15" height="15" viewBox="0 0 15 15"><path d="M7.5 0.5 L14 7 L7.5 13.5 L1 7 Z" fill="#a0dede" stroke="none"/><path d="M1 7 L7.5 0.5 L14 7" fill="none" stroke="#d8fcfc" stroke-width="2"/><path d="M1 7 L7.5 13.5 L14 7" fill="none" stroke="#4f8a8a" stroke-width="2"/></svg>
<div class="a" style="left:1257px;top:339px;width:182px;height:27px;background:#9ddcdc;"></div>
<div class="a t mono mb" style="left:1279.9px;top:346.8px;font-size:13.5px;color:#000;transform:scaleX(1.123);transform-origin:0 0">Between Nets</div>
<svg class="a" style="left:1262px;top:345px" width="15" height="15" viewBox="0 0 15 15"><path d="M7.5 0.5 L14 7 L7.5 13.5 L1 7 Z" fill="#a0dede" stroke="none"/><path d="M1 7 L7.5 0.5 L14 7" fill="none" stroke="#d8fcfc" stroke-width="2"/><path d="M1 7 L7.5 13.5 L14 7" fill="none" stroke="#4f8a8a" stroke-width="2"/></svg>
<div class="a" style="left:1257px;top:368px;width:182px;height:27px;background:#9ddcdc;"></div>
<div class="a t mono mb" style="left:1279.9px;top:375.8px;font-size:13.5px;color:#000;transform:scaleX(1.123);transform-origin:0 0">Annular Ring</div>
<svg class="a" style="left:1262px;top:374px" width="15" height="15" viewBox="0 0 15 15"><path d="M7.5 0.5 L14 7 L7.5 13.5 L1 7 Z" fill="#c8104a" stroke="none"/><path d="M1 7 L7.5 0.5 L14 7" fill="none" stroke="#4f8a8a" stroke-width="2"/><path d="M1 7 L7.5 13.5 L14 7" fill="none" stroke="#ffffff" stroke-width="2"/></svg>
<div class="a" style="left:1257px;top:397px;width:182px;height:27px;background:#9ddcdc;"></div>
<div class="a t mono mb" style="left:1279.9px;top:404.8px;font-size:13.5px;color:#000;transform:scaleX(1.123);transform-origin:0 0">Between Midpoints</div>
<svg class="a" style="left:1262px;top:403px" width="15" height="15" viewBox="0 0 15 15"><path d="M7.5 0.5 L14 7 L7.5 13.5 L1 7 Z" fill="#a0dede" stroke="none"/><path d="M1 7 L7.5 0.5 L14 7" fill="none" stroke="#d8fcfc" stroke-width="2"/><path d="M1 7 L7.5 13.5 L14 7" fill="none" stroke="#4f8a8a" stroke-width="2"/></svg>
<div class="a" style="left:1256px;top:457px;width:184px;height:28px;background:#55c9a9;"></div>
<div class="a" style="left:1258px;top:459px;width:180px;height:24px;background:#9ddcdc;border-style:solid;border-width:3px;border-color:#c8fcfc #4f8a8a #4f8a8a #c8fcfc;"></div>
<div class="a" style="left:1256px;top:484px;width:184px;height:1px;background:#000;"></div>
<div class="a t mono mb" style="left:1324.7px;top:465.5px;font-size:13.5px;color:#000;transform:scaleX(1.123);transform-origin:0 0">Close</div>
<div class="a" style="left:1276px;top:489px;width:164px;height:236px;background:#000;"></div>
<div class="a" style="left:1277px;top:489px;width:1.5px;height:236px;background:#3a8a74;"></div>
<div class="a" style="left:1438px;top:489px;width:2px;height:236px;background:#c0fcf0;"></div>
<svg class="a" style="left:0;top:0" width="1440" height="840"><rect x="1292" y="555" width="146" height="96" fill="#ff0000"/><line x1="1278" y1="573.5" x2="1438" y2="573.5" stroke="#c09020" stroke-width="1"/><line x1="1278" y1="637.5" x2="1438" y2="637.5" stroke="#c09020" stroke-width="1"/><line x1="1278.5" y1="573" x2="1278.5" y2="638" stroke="#608020" stroke-width="1"/><path d="M1287 633 V577.5 H1356.5 V633 Z" fill="none" stroke="#40e0f0" stroke-width="2"/><path d="M1360 633 V577.5 H1431 V633 Z" fill="none" stroke="#40e0f0" stroke-width="2"/><path d="M1287 633 V577.5 H1292" fill="none" stroke="#ffffff" stroke-width="2"/><line x1="1356.5" y1="578" x2="1356.5" y2="632" stroke="#a0a0a0" stroke-width="1.5"/><line x1="1359.5" y1="578" x2="1359.5" y2="632" stroke="#a0a0a0" stroke-width="1.5"/><rect x="1355" y="600" width="6" height="5" fill="#ff0000"/><circle cx="1358" cy="601" r="2" fill="#40e0f0"/><circle cx="1358" cy="609" r="2" fill="#40e0f0"/><path d="M1283 629 L1289 635 M1289 629 L1283 635" stroke="#fff" stroke-width="1"/></svg>
<div class="a" style="left:1276px;top:725px;width:164px;height:45px;background:#55c9a9;"></div>
<div class="a" style="left:1276px;top:725px;width:164px;height:1px;background:#c0fcf0;"></div>
<div class="a" style="left:1276px;top:725px;width:1.5px;height:45px;background:#3a8a74;"></div>
<div class="a t mono mb" style="left:1279.7px;top:734.7px;font-size:13.5px;color:#000;transform:scaleX(1.123);transform-origin:0 0">X = 6.272561"</div>
<div class="a t mono mb" style="left:1279.7px;top:749.7px;font-size:13.5px;color:#000;transform:scaleX(1.123);transform-origin:0 0">Y = 14.422702"</div>
<div class="a" style="left:0px;top:770px;width:1440px;height:34px;background:#000;"></div>
<div class="a" style="left:0px;top:771px;width:1440px;height:31px;background:#fefcc9;"></div>
<div class="a" style="left:0px;top:771px;width:66px;height:31px;background:#fefcc9;"></div>
<div class="a" style="left:32px;top:771px;width:2px;height:31px;background:#000;"></div>
<div class="a" style="left:2px;top:802px;width:63px;height:2px;background:#000;"></div>
<div class="a" style="left:4.5px;top:774.25px;width:26px;height:25.5px;background:transparent;border:1px solid #c8c8a0"></div>
<div class="a" style="left:7px;top:777px;width:20px;height:19.5px;background:transparent;border:1.3px solid #000"></div>
<div class="a" style="left:37.5px;top:774.25px;width:26px;height:25.5px;background:transparent;border:1px solid #c8c8a0"></div>
<div class="a" style="left:40px;top:777px;width:20px;height:19.5px;background:transparent;border:1.3px solid #000"></div>
<svg class="a" style="left:0;top:768px" width="66" height="36" viewBox="0 768 66 36"><path d="M10.5 780.2 V793.3 H23.6" fill="none" stroke="#000" stroke-width="1.1"/><path d="M12.6 781.2 L22.5 791.1" stroke="#000" stroke-width="1.1"/><path d="M12.2 780.8 L17 781.2 M12.2 780.8 L12.6 785.6 M22.9 791.6 L18.1 791.2 M22.9 791.6 L22.5 786.8" stroke="#000" stroke-width="1.2"/><path d="M41.3 793.7 L54.9 780.8" stroke="#000" stroke-width="1.7"/><path d="M41.3 793.7 H55.9" stroke="#000" stroke-width="1.1"/><path d="M45.4 782.2 V785.4 H47.4" fill="none" stroke="#000" stroke-width="0.9"/><path d="M44.5 793.5 Q46.5 790.5 48 793.5 Z" fill="#000"/><text x="49.6" y="792.2" font-family="Liberation Mono" font-weight="bold" font-size="6">&#945;</text></svg>
<div class="a" style="left:66px;top:771px;width:28px;height:32px;background:#55c9a9;"></div>
<div class="a" style="left:68px;top:773.5px;width:24px;height:27px;background:#fefcc9;border-style:solid;border-width:2px;border-color:#f0ecd0 #a0a080 #a0a080 #f0ecd0;"></div>
<div class="a" style="left:72px;top:779px;width:16px;height:16px;background:transparent;border:1.2px solid #000"></div>
<svg class="a" style="left:66px;top:771px" width="28" height="32" viewBox="66 771 28 32"><path d="M74.7 784.7 L77.8 781.5 H85.4 V792.3 H74.7 Z M80.9 781.5 V792.3 M74.7 787.8 H85.4" fill="none" stroke="#000" stroke-width="1"/></svg>
<div class="a t mono ms" style="left:97px;top:782px;font-size:11.7px;color:#000;letter-spacing:0.2px">X Y :</div>
<div class="a" style="left:143px;top:771px;width:1px;height:31px;background:#000;"></div>
<div class="a" style="left:146px;top:774px;width:167px;height:27px;background:transparent;border:2px solid #bcbc94"></div>
<div class="a" style="left:151px;top:777px;width:1px;height:13px;background:transparent;border-left:1px dotted #000"></div>
<div class="a" style="left:149.5px;top:776.5px;width:4px;height:1px;background:#000;"></div>
<div class="a" style="left:149.5px;top:789.5px;width:4px;height:1px;background:#000;"></div>
<div class="a" style="left:315px;top:771px;width:2px;height:31px;background:#000;"></div>
<div class="a" style="left:94px;top:771px;width:1px;height:31px;background:#000;"></div>
<div class="a" style="left:316px;top:771px;width:31px;height:31px;background:#55c9a9;"></div>
<div class="a" style="left:318px;top:773px;width:27px;height:27px;background:#fefcc9;border-style:solid;border-width:2px;border-color:#f8f4e0 #a8a888 #a8a888 #f8f4e0;"></div>
<div class="a" style="left:324px;top:779px;width:16px;height:16px;background:transparent;border:1px solid #000"></div>
<div class="a" style="left:331px;top:782px;width:2px;height:8px;background:#000;"></div>
<div class="a" style="left:331px;top:791px;width:2px;height:2px;background:#000;"></div>
<div class="a" style="left:347px;top:771px;width:1px;height:31px;background:#000;"></div>
<div class="a t mono ms" style="left:351px;top:782.1px;font-size:11.7px;color:#000;">&lt;M1&gt; - Select first point</div>
<div class="a" style="left:1359px;top:771px;width:2px;height:31px;background:#000;"></div>
<div class="a" style="left:1361px;top:771px;width:79px;height:31px;background:#55c9a9;"></div>
<div class="a" style="left:1367px;top:774px;width:70px;height:27px;background:#55c9a9;border-style:solid;border-width:2px;border-color:#b0f0dc #2e7a5a #2e7a5a #b0f0dc;"></div>
<div class="a t mono mb" style="left:1373px;top:781.9px;font-size:13.5px;color:#000;transform:scaleX(1.123);transform-origin:0 0">Inch</div>
<div class="a" style="left:1417px;top:785px;width:12px;height:6px;background:#80c8b0;border-style:solid;border-width:1px;border-color:#d8fcf0 #2e7a5a #2e7a5a #d8fcf0;"></div>
<div class="a" style="left:0px;top:802px;width:1440px;height:3px;background:#000;"></div>
<div class="a" style="left:0px;top:805px;width:1440px;height:3px;background:#6a9a9a;"></div>
<div class="a" style="left:2px;top:807px;width:1436px;height:27px;background:#000;"></div>
<div class="a" style="left:3px;top:808px;width:1434px;height:25px;background:#b0fafa;border-style:solid;border-width:2px;border-color:#e0ffff #50908c #50908c #e0ffff;"></div>
<div class="a" style="left:0px;top:834px;width:1440px;height:2px;background:#d8f0f0;"></div>
<div class="a" style="left:0px;top:836px;width:1440px;height:4px;background:#888888;"></div>
<div class="a" style="left:0px;top:805px;width:2px;height:31px;background:#6a9a9a;"></div>
<div class="a t mono ms" style="left:636px;top:815px;font-size:11.7px;color:#000;">drl -&gt; cs : 0.0033622</div>
<div class="a" style="left:1291px;top:825px;width:149px;height:15px;background:#eef2f6;border-top:1px solid #8aa0b0;border-left:1px solid #8aa0b0"></div>
<svg class="a" style="left:1291px;top:825px" width="149" height="15" viewBox="0 0 149 15"><rect x="2.5" y="2" width="16" height="14" rx="2" fill="#e85020"/><text x="10.5" y="15" text-anchor="middle" font-family="Liberation Sans" font-weight="bold" font-size="14" fill="#fff">S</text><text x="31.5" y="15.5" text-anchor="middle" font-family="Liberation Sans" font-weight="bold" font-size="15" fill="#4a80c8">&#20013;</text><path d="M55 4.5 Q62 11 46.5 15.5 Q53 10.5 55 4.5Z" fill="#4a80c8"/><circle cx="72" cy="6" r="2" fill="none" stroke="#4a80c8" stroke-width="1"/><circle cx="77.5" cy="14" r="1.3" fill="#4a80c8"/><rect x="84.5" y="5" width="17" height="11" fill="#4a80c8"/><path d="M86.5 7.5 H99.5 M86.5 10.5 H99.5" stroke="#fff" stroke-width="1.2" stroke-dasharray="1.5 1"/><circle cx="113" cy="5.5" r="3" fill="#a8a8a8"/><path d="M107 16 Q107 10 113 10 Q119 10 119 16Z" fill="#a8a8a8"/><path d="M140 4 L137 7 L138 9 L140 9 L143 6 Q144 10 140 12 L132 17 L130 15 L136 9 Q134 5 140 4Z" fill="#4a80c8"/></svg>
<!--END-->
</body></html>
